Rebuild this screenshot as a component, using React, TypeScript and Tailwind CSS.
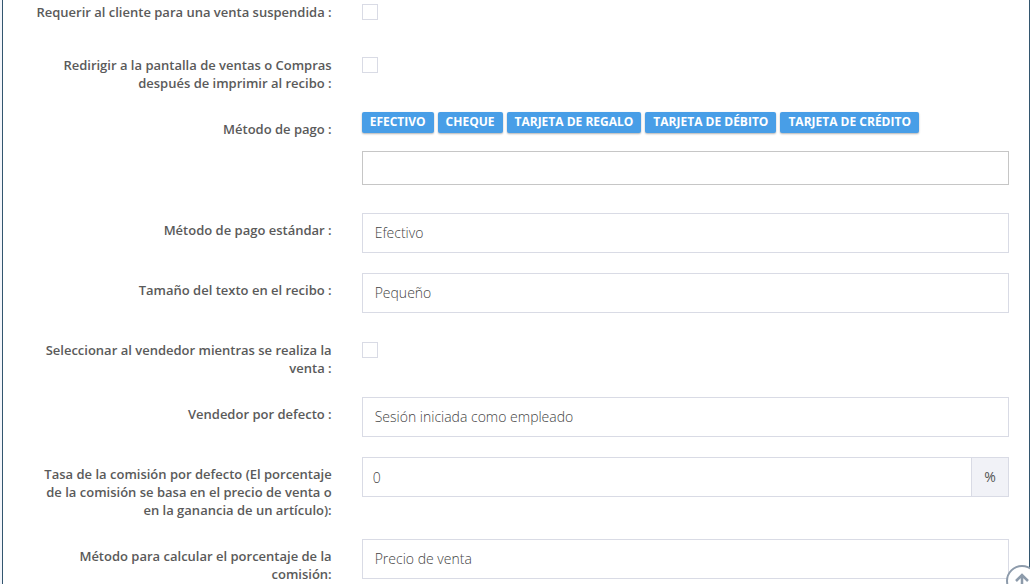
import { useState, ReactNode } from "react";

const initialTags = [
  "Efectivo",
  "Cheque",
  "Tarjeta de regalo",
  "Tarjeta de débito",
  "Tarjeta de crédito",
];

const fieldClass =
  "block h-10 w-full appearance-none rounded-none border border-[#d9dbe5] bg-white px-3 text-sm font-light text-[#444] outline-none focus:border-[#489ee7]";

const FormRow = ({
  label,
  id,
  children,
}: {
  label: string;
  id: string;
  children: ReactNode;
}) => {
  return (
    <div className="mb-5 flex min-h-[33px] last:mb-0">
      <div className="w-1/3 pt-2 pr-[15px] pl-6 text-right">
        <label
          className="block text-[13px] leading-[18px] font-semibold text-[#5a5a5a]"
          htmlFor={id}
        >
          {label}
        </label>
      </div>
      <div className="w-2/3 px-[15px]">{children}</div>
    </div>
  );
};

const CheckboxRow = ({ label, id }: { label: string; id: string }) => {
  const [checked, setChecked] = useState(false);

  return (
    <FormRow label={label} id={id}>
      <input
        className="mt-[9px] block size-4 appearance-none border border-[#d9dbe5] bg-white checked:bg-[#489ee7]"
        id={id}
        type="checkbox"
        checked={checked}
        onChange={(e) => setChecked(e.target.checked)}
      />
    </FormRow>
  );
};

const SelectRow = ({
  label,
  id,
  options,
}: {
  label: string;
  id: string;
  options: string[];
}) => {
  const [value, setValue] = useState(options[0]);

  return (
    <FormRow label={label} id={id}>
      <select
        className={fieldClass}
        id={id}
        value={value}
        onChange={(e) => setValue(e.target.value)}
      >
        {options.map((option) => (
          <option key={option} value={option}>
            {option}
          </option>
        ))}
      </select>
    </FormRow>
  );
};

const App = () => {
  const [rate, setRate] = useState("0");
  const [payment, setPayment] = useState("");

  return (
    <div className="flex min-h-screen overflow-hidden bg-[#f4f6fb] pl-[2px] font-['Open_Sans','Noto_Sans',sans-serif]">
      <form
        className="w-full border-x border-[#33566f] bg-white px-[5px]"
        onSubmit={(e) => e.preventDefault()}
      >
        {/* the list is scrolled slightly past its first row */}
        <div className="-mt-[5px]">
          <CheckboxRow
            id="require_customer"
            label="Requerir al cliente para una venta suspendida :"
          />
          <CheckboxRow
            id="redirect_after_print"
            label="Redirigir a la pantalla de ventas o Compras después de imprimir al recibo :"
          />
          <FormRow id="payment_types" label="Método de pago :">
            <div className="flex flex-wrap gap-1">
              {initialTags.map((tag) => (
                <span
                  key={tag}
                  className="h-[21px] rounded-[2px] bg-[#489ee7] px-2 text-xs leading-5 font-bold text-white uppercase shadow-[0_1px_2px_rgba(0,0,0,0.3)]"
                >
                  {tag}
                </span>
              ))}
            </div>
            <input
              className="mt-[18px] mb-2 block h-[34px] w-full border border-[#c6c6c6] px-3 text-sm font-light outline-none"
              id="payment_types"
              type="text"
              value={payment}
              onChange={(e) => setPayment(e.target.value)}
            />
          </FormRow>
          <SelectRow
            id="default_payment"
            label="Método de pago estándar :"
            options={["Efectivo", "Cheque"]}
          />
          <SelectRow
            id="receipt_text_size"
            label="Tamaño del texto en el recibo :"
            options={["Pequeño", "Mediano", "Grande"]}
          />
          <CheckboxRow
            id="select_sales_person"
            label="Seleccionar al vendedor mientras se realiza la venta :"
          />
          <SelectRow
            id="default_sales_person"
            label="Vendedor por defecto :"
            options={["Sesión iniciada como empleado", "No establecido"]}
          />
          <FormRow
            id="commission_rate"
            label="Tasa de la comisión por defecto (El porcentaje de la comisión se basa en el precio de venta o en la ganancia de un artículo):"
          >
            <div className="flex">
              <input
                className="block h-10 min-w-0 flex-1 border border-[#d9dbe5] px-[10px] text-sm font-light text-[#444] outline-none focus:border-[#489ee7]"
                id="commission_rate"
                type="text"
                value={rate}
                onChange={(e) => setRate(e.target.value)}
              />
              <span className="flex h-10 w-[37px] items-center justify-center border border-l-0 border-[#d9dbe5] bg-[#f1f2f7] text-sm text-[#555]">
                %
              </span>
            </div>
          </FormRow>
          <SelectRow
            id="commission_method"
            label="Método para calcular el porcentaje de la comisión:"
            options={["Precio de venta", "Ganancia"]}
          />
        </div>
      </form>
      <button
        className="fixed -right-2 -bottom-[13px] size-8 cursor-pointer"
        type="button"
        aria-label="Volver arriba"
        onClick={() => window.scrollTo({ top: 0, behavior: "smooth" })}
      >
        <svg
          className="size-8"
          viewBox="0 0 32 32"
          fill="none"
          stroke="#8d9bab"
          strokeWidth="2"
        >
          <circle cx="16" cy="16" r="15" fill="#fff" />
          <path d="M10 16l6-6 6 6M16 10v15" strokeWidth="2.5" />
        </svg>
      </button>
    </div>
  );
};

export default App;
